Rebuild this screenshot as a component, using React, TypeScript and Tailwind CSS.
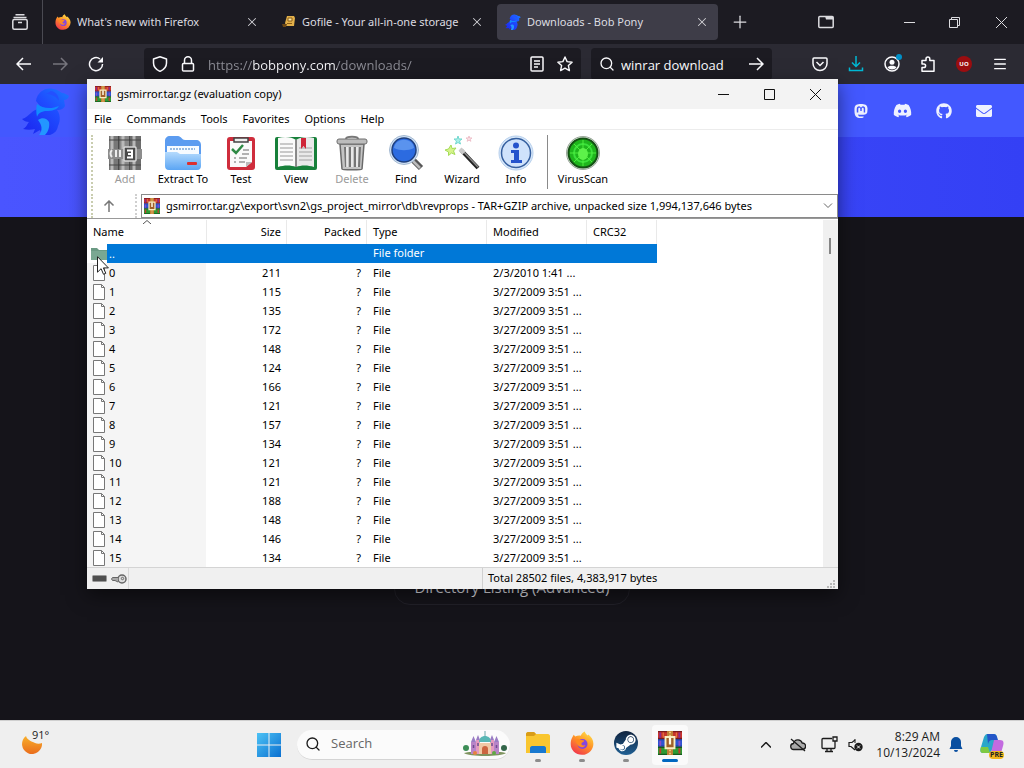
import { useState } from 'react'
import type { ReactNode } from 'react'
import { FaDiscord, FaEnvelope, FaGithub, FaMastodon, FaSteamSymbol } from 'react-icons/fa'
import { Menu, Plus, Search, X } from 'lucide-react'

type Entry = { name: string; size: string; modified: string }

const sizes = [211, 115, 135, 172, 148, 124, 166, 121, 157, 134, 121, 121, 188, 148, 146, 134]

const entries: Entry[] = sizes.map((size, i) => ({
  name: String(i),
  size: String(size),
  modified: i === 0 ? '2/3/2010 1:41 ...' : '3/27/2009 3:51 ...',
}))

const menus = ['File', 'Commands', 'Tools', 'Favorites', 'Options', 'Help']

/* ---------- icons ---------- */

function WinRarIcon({ className }: { className: string }) {
  return (
    <svg viewBox="0 0 32 32" className={className} aria-hidden="true">
      <rect width="32" height="11" fill="#c8352a" />
      <rect y="11" width="32" height="10" fill="#2d55d2" />
      <rect y="21" width="32" height="11" fill="#2c9a33" />
      <path d="M0 .8h32M0 9.800h32" stroke="#7a1a1c" strokeWidth="1.6" />
      <path d="M0 11.600h32M0 20.200h32" stroke="#1b2c86" strokeWidth="1.2" />
      <path d="M0 21.800h32M0 31.200h32" stroke="#175a1d" strokeWidth="1.6" />
      <path d="M3 2v7M28.500 2v7" stroke="#8a2a8c" strokeWidth="2.5" />
      <path d="M3 13v6.500M28.500 13v6.500" stroke="#8a4cc8" strokeWidth="2.500" />
      <path d="M3 23v7M28.500 23v7" stroke="#c43a2c" strokeWidth="2.500" />
      <path d="M7 2v7M24.500 2v7" stroke="#e8793f" strokeWidth="1.500" />
      <rect x="12" width="8" height="32" fill="#c07f36" />
      <path d="M16 1v6M16 25v6" stroke="#f7dc8a" strokeWidth="2" strokeDasharray="2 2" />
      <path d="M10 8h12v15H10z" fill="#a0602a" stroke="#fbeec0" strokeWidth="2.500" />
      <path d="M16 9v9" stroke="#fffbe8" strokeWidth="3" />
    </svg>
  )
}

function FirefoxIcon({ className }: { className: string }) {
  return (
    <svg viewBox="0 0 24 24" className={className} aria-hidden="true">
      <defs>
        <linearGradient id="fox" x1="0.8" y1="0" x2="0.2" y2="1">
          <stop offset="0" stopColor="#ffe14a" />
          <stop offset="0.45" stopColor="#ff9426" />
          <stop offset="1" stopColor="#f0304f" />
        </linearGradient>
      </defs>
      <path
        d="M2.200 6.500 3.700 3.800 5.200 5.600C7 4.600 9 4.300 10.800 4.700 11.300 2.800 13 1 14.800.4c.3 2 1.700 2.900 3 4.100l.6-.9c2.900 2.300 5 5.500 5 9.200A11.200 11.200 0 0 1 12 23.800C5.500 23.800.7 19 .7 13c0-2.500.4-4.500 1.500-6.500Z"
        fill="url(#fox)"
      />
      <circle cx="12.500" cy="13" r="5" fill="#8546dd" />
      <path d="M5.500 8.500c2-.8 4-.7 5.400.6 1.500.1 2.800.1 3.300.7-.4 1.500-2.400 1.700-2.800 2.600-.1 1.700 1.600 2.600 4 1.500-1.400 3.500-8.200 4-9.900-5.400Z" fill="#ff8a1f" />
    </svg>
  )
}

function GofileIcon() {
  return (
    <svg viewBox="0 0 16 16" className="size-4 shrink-0" aria-hidden="true">
      <path d="M7 2h7l1 2-1 8H6L5 9Z" fill="#e2b04a" />
      <path d="M8 4h4v3H8zM7 9.500h5" fill="#fbe6a4" stroke="#8c5f17" strokeWidth="1" />
      <path d="M2 10h5l-1 3H3z" fill="#6b4715" />
    </svg>
  )
}

function PonyIcon({ className }: { className: string }) {
  return (
    <svg viewBox="0 0 48 48" className={className} aria-hidden="true">
      <defs>
        <linearGradient id="mane" x1="0" y1="1" x2="1" y2="0">
          <stop offset="0" stopColor="#1a22ee" />
          <stop offset="0.6" stopColor="#1f4dff" />
          <stop offset="1" stopColor="#1a7bff" />
        </linearGradient>
      </defs>
      <path d="M14 14C15 5 24 0 31 2c4 0 7 3 9 4 3 0 5 2 7 3-1 3-3 4-5 4l1 6c-2 4-6 4-8 4 3 4 4 10 1 16-1 5-3 7-8 9h-8l-2-5-7 4 2-5c-4 1-8 1-12 0 4-2 4-5 6-7-3 0-5-1-7-3 4-1 6-4 9-6 4-4 8-3 9-7Z" fill="url(#mane)" />
      <path d="M15 17c6 5 15 5 22 2-3 5-10 5-14 5-5 1-7 3-8 6-1-5-1-9 0-13Z" fill="#128bff" />
      <path d="M16 33c4-3 9-2 11 2 1 5-1 10-4 13h-6c4-5 3-10-1-15Z" fill="#2396ff" />
      <path d="M29 4c5 1 8 5 8 10-3-5-8-7-13-7Z" fill="#2450ff" />
    </svg>
  )
}

function ShieldIcon() {
  return (
    <svg viewBox="0 0 16 16" className="size-4 shrink-0" fill="none" stroke="currentColor" strokeWidth="1.500" aria-hidden="true">
      <path d="M8 .8 14.500 3v4c0 4-2.500 6.700-6.500 8.400C4 13.700 1.500 11 1.500 7V3Z" strokeLinejoin="round" />
    </svg>
  )
}

function LockIcon() {
  return (
    <svg viewBox="0 0 16 16" className="size-4 shrink-0" fill="none" stroke="currentColor" strokeWidth="1.500" aria-hidden="true">
      <rect x="2.500" y="7.500" width="11" height="7.500" rx="1" />
      <path d="M4.500 7.500V4.300a3.500 3.500 0 0 1 7 0v3.200" />
    </svg>
  )
}

function AddIcon() {
  return (
    <svg viewBox="0 0 36 36" className="size-9" aria-hidden="true">
      <rect x="2" y="1" width="10" height="34" fill="#777" />
      <rect x="13" y="1" width="10" height="34" fill="#888" />
      <rect x="24" y="1" width="10" height="34" fill="#6c6c6c" />
      <path d="M5 1v34M16 1v34M27 1v34" stroke="#b9b9b9" strokeWidth="3" />
      <path d="M2 5h32M2 30h32" stroke="#4b4b4b" strokeWidth="1.500" strokeOpacity="0.7" />
      <path d="M12 1v34M23 1v34" stroke="#3d3d3d" strokeWidth="1.500" />
      <rect x="1" y="14" width="34" height="10" fill="#8d8d8d" />
      <path d="M5 15c-2 2-2 5 0 7M9 15v7M13 15v7" fill="none" stroke="#eee" strokeWidth="2" />
      <rect x="17" y="12" width="12" height="14" rx="1" fill="#4a4a4a" stroke="#d8d8d8" strokeWidth="1.500" />
      <path d="M20 15.500h5v7h-5M21 19h4" fill="none" stroke="#fff" strokeWidth="2" />
    </svg>
  )
}

function ExtractIcon() {
  return (
    <svg viewBox="0 0 36 36" className="size-9" aria-hidden="true">
      <defs>
        <linearGradient id="blueFolder" x1="0" y1="0" x2="0" y2="1">
          <stop offset="0" stopColor="#b4dafd" />
          <stop offset="1" stopColor="#5ba5f4" />
        </linearGradient>
      </defs>
      <path d="M0 6c0-3 2-5 5-5h8c3 0 4 4 7 4h11c3 0 5 2 5 5v12H0Z" fill="#5c9cf0" />
      <path d="M2 11h32v8H2z" fill="#f7fbff" />
      <path d="M5 14h25" stroke="#7aa6d9" strokeWidth="1.500" strokeDasharray="2 1" />
      <path d="M0 17h12l3 2h21v12c0 2-1 4-4 4H4c-3 0-4-2-4-4Z" fill="url(#blueFolder)" />
      <rect x="22" y="27" width="10" height="3" rx="1" fill="#dd3030" />
    </svg>
  )
}

function TestIcon() {
  return (
    <svg viewBox="0 0 30 36" className="h-9 w-[30px]" aria-hidden="true">
      <rect x="1" y="2" width="28" height="33" rx="3" fill="#cf2d3c" />
      <path d="M4 6h22v21l-6 5H4Z" fill="#fafafa" />
      <path d="M26 27h-6v5Z" fill="#bcbcbc" />
      <path d="M8 3h14v4H8z" fill="#eee" stroke="#444" strokeWidth="1.500" />
      <path d="m6 14 4 4 7-8" fill="none" stroke="#2e8a45" strokeWidth="2.500" />
      <path d="M17 15h6M16 19h7M8 23h2M13 23h8M8 27h2M13 27h6" stroke="#9a9a9a" strokeWidth="1.500" />
    </svg>
  )
}

function ViewIcon() {
  return (
    <svg viewBox="0 0 44 36" className="h-9 w-11" aria-hidden="true">
      <rect x="1" y="2" width="42" height="33" rx="2" fill="#17803a" />
      <path d="M4 3c7-2 14-1 18 2v27c-5-2-12-2-18 0Z" fill="#fafafa" />
      <path d="M40 3c-7-2-14-1-18 2v27c5-2 12-2 18 0Z" fill="#e9e9e9" />
      <path d="M6 9h13M6 13h13M6 17h13M6 21h13M6 25h13M25 17h13M25 21h13M25 25h13M25 13h13" stroke="#b9b9b9" strokeWidth="1.500" />
      <path d="M22 5v27" stroke="#666" strokeWidth="1.500" />
      <path d="M27 3h5v11l-2.500-3L27 14Z" fill="#cf2638" />
    </svg>
  )
}

function DeleteIcon() {
  return (
    <svg viewBox="0 0 32 36" className="h-9 w-8" aria-hidden="true">
      <path d="M4 9h24l-2 25c0 1-20 1-20 0Z" fill="#c4c4c4" stroke="#6a6a6a" strokeWidth="1.500" />
      <path d="M9 12l1 20M14 12v20M19 12v20M24 12l-1 20" stroke="#757575" strokeWidth="2" />
      <path d="M11 12v20M16 12v20M21 12v20" stroke="#f3f3f3" strokeWidth="1.500" />
      <rect x="1" y="4" width="30" height="5" rx="2" fill="#bcbcbc" stroke="#6e6e6e" />
      <path d="M10 4c0-3 12-3 12 0" fill="none" stroke="#777" strokeWidth="2" />
    </svg>
  )
}

function FindIcon() {
  return (
    <svg viewBox="0 0 36 36" className="size-9" aria-hidden="true">
      <path d="m25 25 8 8" stroke="#555" strokeWidth="6" />
      <path d="m24 25 8 8" stroke="#bbb" strokeWidth="2.500" />
      <circle cx="16" cy="15" r="14.500" fill="#cfe0f3" stroke="#a3b8d0" />
      <circle cx="16" cy="15" r="12" fill="#2c6be0" stroke="#1e3f7e" strokeWidth="1.500" />
      <path d="M6 13C7 2 25 2 26 13c-6 3-14 3-20 0Z" fill="#5a93ee" />
    </svg>
  )
}

function WizardIcon() {
  return (
    <svg viewBox="0 0 36 36" className="size-9" aria-hidden="true">
      <path d="m17 15 17 18" stroke="#222" strokeWidth="4" />
      <path d="m17 14 17 18" stroke="#8a8a8a" strokeWidth="1.500" />
      <path d="m16 14 4 4" stroke="#c9c9c9" strokeWidth="4" />
      <path d="m7 10 1 3.500 4-.5-2.500 3 1.500 3.500-3.500-1.500-3 2.500v-3.500L1 15l3.500-1Z" fill="#d6f38a" stroke="#a5dc58" />
      <path d="m14 1 1 3 3 0-2.500 2 1 3-2.500-1.500L11.500 9l1-3L10 4h3Z" fill="#a8efe6" stroke="#74d8d0" />
      <path d="m25 1 .7 2h2.300l-1.700 1.300.5 2-1.800-1.200-1.800 1.200.5-2L22 3h2.300Z" fill="#fbe3e8" stroke="#eec0ca" />
    </svg>
  )
}

function InfoIcon() {
  return (
    <svg viewBox="0 0 36 36" className="size-9" aria-hidden="true">
      <circle cx="18" cy="18" r="17" fill="#d8e8fa" stroke="#b6cfec" />
      <circle cx="18" cy="18" r="14.500" fill="#cfe2fb" stroke="#355f9f" strokeWidth="1.500" />
      <circle cx="18" cy="10.500" r="3" fill="#2453cc" />
      <path d="M13 15h8v10h3v3H13v-3h3v-7h-3Z" fill="#2453cc" />
    </svg>
  )
}

function VirusIcon() {
  return (
    <svg viewBox="0 0 36 36" className="size-9" aria-hidden="true">
      <circle cx="18" cy="18" r="16.500" fill="#dfe6df" stroke="#9aa79a" />
      <circle cx="18" cy="18" r="14.500" fill="#1fb51c" stroke="#145214" strokeWidth="2" />
      <circle cx="18" cy="18" r="9" fill="none" stroke="#3be23b" strokeWidth="2" />
      <path d="M18 5v26M5 18h26M9 9l18 18M27 9 9 27" stroke="#4fec3f" strokeWidth="1" />
      <ellipse cx="18" cy="19" rx="5" ry="6" fill="#5df24a" />
    </svg>
  )
}

const tools: { label: string; width: string; icon: ReactNode; disabled?: boolean }[] = [
  { label: 'Add', width: 'w-14', icon: <AddIcon />, disabled: true },
  { label: 'Extract To', width: 'w-[60px]', icon: <ExtractIcon /> },
  { label: 'Test', width: 'w-14', icon: <TestIcon /> },
  { label: 'View', width: 'w-[54px]', icon: <ViewIcon /> },
  { label: 'Delete', width: 'w-[58px]', icon: <DeleteIcon />, disabled: true },
  { label: 'Find', width: 'w-[50px]', icon: <FindIcon /> },
  { label: 'Wizard', width: 'w-[62px]', icon: <WizardIcon /> },
  { label: 'Info', width: 'w-[46px]', icon: <InfoIcon /> },
]

function FileIcon() {
  return (
    <svg viewBox="0 0 12 16" className="h-4 w-3 shrink-0" aria-hidden="true">
      <path d="M.5.5h8l3 3v12H.5Z" fill="#fff" stroke="#777" />
      <path d="M8.500.5v3h3" fill="none" stroke="#777" />
    </svg>
  )
}

/* ---------- browser ---------- */

function Tab({ title, icon, active }: { title: string; icon: ReactNode; active?: boolean }) {
  return (
    <div className={`flex h-9 w-[221px] items-center gap-1.5 rounded pr-[9px] pl-2 ${active ? 'bg-[#3e3d48]' : ''}`}>
      {icon}
      <button role="tab" aria-selected={!!active} className="flex-1 overflow-hidden text-left text-[11px] whitespace-nowrap text-[#dcdce0]">
        {title}
      </button>
      <button aria-label={`Close ${title}`} className="text-[#d0d0d5]">
        <X className="size-3.5" strokeWidth={1.75} />
      </button>
    </div>
  )
}

function TabStrip() {
  return (
    <header className="flex h-11 shrink-0 items-center bg-[#1c1b22] font-['Noto_Sans',sans-serif] text-[#dcdce0]">
      <button aria-label="Firefox View" className="flex h-11 w-[43px] items-center justify-center border-r border-[#4a4a52] pr-0.5">
        <svg viewBox="0 0 16 16" className="size-4" fill="none" stroke="currentColor" strokeWidth="1.500" aria-hidden="true">
          <path d="M3.500.8h9M1.500 3.500h13" />
          <rect x=".8" y="5.500" width="14.400" height="9.700" rx="1.500" />
          <path d="M6 8.500h4" />
        </svg>
      </button>
      <div role="tablist" className="ml-1 flex gap-1">
        <Tab title="What's new with Firefox" icon={<FirefoxIcon className="size-4 shrink-0" />} />
        <Tab title="Gofile - Your all-in-one storage" icon={<GofileIcon />} />
        <Tab title="Downloads - Bob Pony" icon={<PonyIcon className="size-4 shrink-0" />} active />
      </div>
      <button aria-label="New tab" className="ml-3">
        <Plus className="size-5" strokeWidth={1.500} />
      </button>
      <div className="ml-auto flex items-center pr-[17px]">
        <button aria-label="List all tabs" className="mr-[70px]">
          <svg viewBox="0 0 16 14" className="h-3.5 w-4" aria-hidden="true">
            <rect x=".8" y="1.500" width="14.400" height="11" rx="1" fill="none" stroke="currentColor" strokeWidth="1.500" />
            <path d="M7 1h8v3.500H8z" fill="currentColor" />
          </svg>
        </button>
        <button aria-label="Minimize" className="mr-[34px]">
          <svg viewBox="0 0 11 11" className="size-[11px]" stroke="currentColor" aria-hidden="true">
            <path d="M0 5.500h11" />
          </svg>
        </button>
        <button aria-label="Restore" className="mr-9">
          <svg viewBox="0 0 11 11" className="size-[11px]" fill="none" stroke="currentColor" aria-hidden="true">
            <path d="M.5 2.500h8v8h-8zM2.500 2.500v-2h8v8h-2" />
          </svg>
        </button>
        <button aria-label="Close browser">
          <svg viewBox="0 0 11 11" className="size-[11px]" stroke="currentColor" aria-hidden="true">
            <path d="m0 0 11 11M11 0 0 11" />
          </svg>
        </button>
      </div>
    </header>
  )
}

function NavBar() {
  return (
    <div className="flex h-10 shrink-0 items-center bg-[#2b2a33] text-[#fbfbfe]">
      <div className="flex w-36 items-center gap-5 pl-4">
        <button aria-label="Back">
          <svg viewBox="0 0 16 16" className="size-4" fill="none" stroke="currentColor" strokeWidth="1.500" aria-hidden="true">
            <path d="M15 8H1M7 2 1 8l6 6" />
          </svg>
        </button>
        <button aria-label="Forward" className="text-[#77767e]">
          <svg viewBox="0 0 16 16" className="size-4" fill="none" stroke="currentColor" strokeWidth="1.500" aria-hidden="true">
            <path d="M1 8h14M9 2l6 6-6 6" />
          </svg>
        </button>
        <button aria-label="Reload">
          <svg viewBox="0 0 16 16" className="size-4" fill="none" stroke="currentColor" strokeWidth="1.500" aria-hidden="true">
            <path d="M14.500 8A6.500 6.500 0 1 1 12 3" />
            <path d="M15 1v5.500H9.500Z" fill="currentColor" stroke="none" />
          </svg>
        </button>
      </div>

      <div className="flex h-8 w-[437px] items-center gap-3 rounded bg-[#1c1b22] px-2">
        <ShieldIcon />
        <LockIcon />
        {/* the gradient stops keep only the host name bright */}
        <input
          aria-label="Address"
          type="text"
          defaultValue="https://bobpony.com/downloads/"
          className="h-8 min-w-0 flex-1 bg-[linear-gradient(to_right,#8f8f98_45px,#fbfbfe_45px,#fbfbfe_129px,#8f8f98_129px)] bg-clip-text pt-0.5 text-[13px] text-transparent caret-white outline-none"
        />
        <button aria-label="Reader view">
          <svg viewBox="0 0 16 16" className="size-4" fill="none" stroke="currentColor" strokeWidth="1.500" aria-hidden="true">
            <rect x="2" y="1" width="12" height="14" rx="1" />
            <path d="M5 5h6M5 8h6M5 11h4" />
          </svg>
        </button>
        <button aria-label="Bookmark this page">
          <svg viewBox="0 0 16 16" className="size-4" fill="none" stroke="currentColor" strokeWidth="1.400" strokeLinejoin="round" aria-hidden="true">
            <path d="m8 1 2.100 4.600 5 .6-3.700 3.400 1 5L8 12.100l-4.400 2.500 1-5L.9 6.200l5-.6Z" />
          </svg>
        </button>
      </div>

      <div className="ml-2.5 flex h-8 w-[181px] items-center gap-1.5 rounded bg-[#1c1b22] px-2">
        <Search className="size-4" strokeWidth={2} />
        <input aria-label="Search the web" type="text" defaultValue="winrar download" className="h-8 min-w-0 flex-1 bg-transparent pt-0.5 text-[13px] outline-none" />
        <button aria-label="Go">
          <svg viewBox="0 0 16 16" className="size-4" fill="none" stroke="currentColor" strokeWidth="1.500" aria-hidden="true">
            <path d="M1 8h14M9 2l6 6-6 6" />
          </svg>
        </button>
      </div>

      <div className="ml-auto flex items-center gap-5 pr-4">
        <button aria-label="Pocket">
          <svg viewBox="0 0 16 16" className="size-4" fill="none" stroke="currentColor" strokeWidth="1.500" aria-hidden="true">
            <path d="M2 2h12a1 1 0 0 1 1 1v4.500a7 7 0 0 1-14 0V3a1 1 0 0 1 1-1Z" />
            <path d="m4.500 6 3.500 3.500L11.500 6" />
          </svg>
        </button>
        <button aria-label="Downloads" className="text-[#00b8d4]">
          <svg viewBox="0 0 16 16" className="size-4" fill="none" stroke="currentColor" strokeWidth="1.500" aria-hidden="true">
            <path d="M8 0v10M4 6.500l4 4 4-4M1.500 11.500v3h13v-3" />
          </svg>
        </button>
        <button aria-label="Account" className="relative">
          <svg viewBox="0 0 16 16" className="size-4" aria-hidden="true">
            <circle cx="8" cy="8" r="7" fill="none" stroke="currentColor" strokeWidth="1.500" />
            <circle cx="8" cy="6.300" r="2.500" fill="currentColor" />
            <path d="M3.500 11.500c1-2.500 8-2.500 9 0-2 2.500-7 2.500-9 0Z" fill="currentColor" />
          </svg>
          <span className="absolute -top-0.5 -right-0.5 size-1.5 rounded-full bg-[#0090c8]" />
        </button>
        <button aria-label="Extensions">
          <svg viewBox="0 0 16 16" className="size-4" fill="none" stroke="currentColor" strokeWidth="1.500" strokeLinejoin="round" aria-hidden="true">
            <path d="M2 15.200V11.500h1.800a1.800 1.800 0 0 0 0-3.600H2V4.500h4V3a1.900 1.900 0 0 1 3.800 0v1.500H14v10.700Z" />
          </svg>
        </button>
        <button aria-label="uBlock Origin" className="flex size-4 items-center justify-center rounded-full bg-[#9b0d10] text-[6px] font-bold">
          UO
        </button>
        <button aria-label="Open application menu">
          <Menu className="size-4" strokeWidth={2} />
        </button>
      </div>
    </div>
  )
}

function Page() {
  return (
    <main className="flex-1 overflow-hidden bg-[#15141a]">
      <div className="h-[133px] bg-linear-to-r from-[#4a55ff] to-[#3440f5]">
        <nav className="flex h-[53px] items-center justify-between bg-[#4358ff] pr-8 pl-[22px]">
          <a href="#home" aria-label="Bob Pony">
            <PonyIcon className="size-12" />
          </a>
          <div className="flex items-center gap-6 text-[#eef1ff]">
            <a href="#mastodon" aria-label="Mastodon"><FaMastodon className="size-4" /></a>
            <a href="#discord" aria-label="Discord"><FaDiscord className="size-[19px]" /></a>
            <a href="#github" aria-label="GitHub"><FaGithub className="size-4" /></a>
            <a href="#mail" aria-label="Mail"><FaEnvelope className="size-4" /></a>
          </div>
        </nav>
      </div>
      <div className="flex justify-center pt-[352px]">
        <button className="h-9 rounded-2xl border border-[#222129] px-5 text-[15px] text-[#dedee2]">Directory Listing (Advanced)</button>
      </div>
    </main>
  )
}

/* ---------- archive window ---------- */

function FileTable() {
  const [selected, setSelected] = useState('..')
  const divider = 'border-r border-[#e9e9e9]'

  return (
    <table className="w-[570px] table-fixed border-separate border-spacing-0 text-left text-black">
      <colgroup>
        <col className="w-[120px]" />
        <col className="w-20" />
        <col className="w-20" />
        <col className="w-[120px]" />
        <col className="w-[100px]" />
        <col className="w-[70px]" />
      </colgroup>
      <thead>
        <tr className="h-6">
          <th className={`relative pl-1.5 font-normal ${divider}`}>
            Name
            <svg viewBox="0 0 8 4" className="absolute top-0 left-14 h-1 w-2" fill="none" stroke="#555" aria-hidden="true">
              <path d="M0 4l4-3.500L8 4" />
            </svg>
          </th>
          <th className={`pr-[5px] text-right font-normal ${divider}`}>Size</th>
          <th className={`pr-[5px] text-right font-normal ${divider}`}>Packed</th>
          <th className={`pl-1.5 font-normal ${divider}`}>Type</th>
          <th className={`pl-1.5 font-normal ${divider}`}>Modified</th>
          <th className={`pl-1.5 font-normal ${divider}`}>CRC32</th>
        </tr>
      </thead>
      <tbody>
        <tr className="h-[19px] text-white">
          <td>
            <div className="flex h-[19px] items-center">
              <svg viewBox="0 0 16 13" className="ml-1 h-[13px] w-4 shrink-0" aria-hidden="true">
                <path d="M0 1h6l2 2h8v10H0Z" fill="#6b9a84" />
                <path d="M0 4h16v9H0Z" fill="#7aa892" />
              </svg>
              <span className="h-[19px] flex-1 bg-[#0078d7] pl-0.5 leading-[19px]">..</span>
            </div>
          </td>
          <td className="bg-[#0078d7]" />
          <td className="bg-[#0078d7]" />
          <td className="bg-[#0078d7] pl-1.5">File folder</td>
          <td className="bg-[#0078d7]" />
          <td className="bg-[#0078d7]" />
        </tr>
        {entries.map((e) => (
          <tr
            key={e.name}
            onClick={() => setSelected(e.name)}
            className={`h-[19px] leading-[19px] ${selected === e.name ? 'bg-[#cce8ff]' : ''}`}
          >
            <td className="border-r border-white bg-[#f5f5f5]">
              <div className="flex h-[19px] items-center gap-1 pl-1.5">
                <FileIcon />
                {e.name}
              </div>
            </td>
            <td className="pr-1.5 text-right">{e.size}</td>
            <td className="pr-1.5 text-right">?</td>
            <td className="pl-1.5">File</td>
            <td className="overflow-hidden pl-1.5 whitespace-nowrap">{e.modified}</td>
            <td />
          </tr>
        ))}
      </tbody>
    </table>
  )
}

function ArchiveWindow() {
  return (
    <section className="absolute top-[79px] left-[87px] flex w-[751px] flex-col bg-white font-['Noto_Sans',sans-serif] text-[11px] text-black shadow-[0_6px_18px_rgba(0,0,0,0.5)]">
      {/* Title bar */}
      <div className="flex h-[30px] items-center bg-[#f3f3f3] pr-[17px] pl-2">
        <WinRarIcon className="size-4" />
        <h1 className="ml-1.5 flex-1">gsmirror.tar.gz (evaluation copy)</h1>
        <div className="flex items-center gap-[35px]">
          <button aria-label="Minimize">
            <svg viewBox="0 0 11 11" className="size-[11px]" stroke="#111" aria-hidden="true"><path d="M0 5.500h11" /></svg>
          </button>
          <button aria-label="Maximize">
            <svg viewBox="0 0 11 11" className="size-[11px]" fill="none" stroke="#111" aria-hidden="true"><path d="M.5.5h10v10H.5z" /></svg>
          </button>
          <button aria-label="Close">
            <svg viewBox="0 0 11 11" className="size-[11px]" stroke="#111" aria-hidden="true"><path d="m0 0 11 11M11 0 0 11" /></svg>
          </button>
        </div>
      </div>

      {/* Menu */}
      <nav className="flex h-5 items-center gap-[15px] pl-[7px]">
        {menus.map((m) => (
          <button key={m}>{m}</button>
        ))}
      </nav>

      {/* Toolbar */}
      <div className="flex h-[63px] items-start border-t border-[#ececec] pt-[5px]">
        <div className="ml-1 h-14 border-l-2 border-dotted border-[#c9cdb0]" />
        <div className="ml-1 flex">
          {tools.map((t) => (
            <button
              key={t.label}
              disabled={t.disabled}
              className={`flex flex-col items-center whitespace-nowrap ${t.width} ${t.disabled ? 'text-[#9a9a9a]' : ''}`}
            >
              {t.icon}
              <span className="leading-4">{t.label}</span>
            </button>
          ))}
        </div>
        <div className="ml-2 h-[54px] border-l border-[#8a8a8a]" />
        <button className="ml-[5px] flex w-[60px] flex-col items-center">
          <VirusIcon />
          <span className="leading-4">VirusScan</span>
        </button>
      </div>

      {/* Address */}
      <div className="flex h-[27px] items-end border-b border-[#999]">
        <div className="ml-1 h-6 border-l-2 border-dotted border-[#c9cdb0]" />
        <button aria-label="Up one level" className="ml-2.5 flex h-6 items-center">
          <svg viewBox="0 0 12 12" className="size-3" fill="none" stroke="#777" strokeWidth="1.500" aria-hidden="true">
            <path d="M6 12V1M1.500 5.500 6 1l4.500 4.500" />
          </svg>
        </button>
        <div className="ml-5 h-6 border-l-2 border-dotted border-[#cfcfcf]" />
        <div className="ml-1 flex h-6 flex-1 items-center border border-[#8a8a8a] pr-1 pl-0.5">
          <WinRarIcon className="size-4 shrink-0" />
          <select aria-label="Archive path" className="ml-1.5 flex-1 appearance-none bg-transparent outline-none">
            <option>gsmirror.tar.gz\export\svn2\gs_project_mirror\db\revprops - TAR+GZIP archive, unpacked size 1,994,137,646 bytes</option>
          </select>
          <svg viewBox="0 0 10 6" className="h-1.5 w-2.5" fill="none" stroke="#666" aria-hidden="true">
            <path d="m1 .5 4 4 4-4" />
          </svg>
        </div>
      </div>

      {/* File list */}
      <div className="flex h-[348px] overflow-hidden pt-px">
        <div className="flex-1">
          <FileTable />
        </div>
        <div className="w-[15px] bg-[#f0f0f0] pt-[18px] pl-1.5">
          <div className="h-4 w-0.5 bg-[#858585]" />
        </div>
      </div>

      {/* Status bar */}
      <footer className="flex h-[22px] items-center border-t border-[#d4d4d4] bg-[#f0f0f0]">
        <div className="flex h-full w-[42px] items-center gap-1 border-r border-[#d9d9d9] pl-[5px]">
          <svg viewBox="0 0 15 7" className="h-[7px] w-[15px]" aria-hidden="true">
            <rect x=".5" y=".5" width="14" height="6" rx="1" fill="#4f4f4f" stroke="#999" />
          </svg>
          <svg viewBox="0 0 16 10" className="h-2.5 w-4" fill="none" stroke="#666" aria-hidden="true">
            <circle cx="11" cy="5" r="4" fill="#ddd" strokeWidth="1.500" />
            <circle cx="11.500" cy="4.500" r="1.200" />
            <path d="M7 3.500H1.500L.5 5l1 1.500H4L7 8" fill="#aaa" />
          </svg>
        </div>
        <div className="h-full w-[354px] border-r border-[#d0d0d0]" />
        <p className="flex-1 pl-[5px]">Total 28502 files, 4,383,917 bytes</p>
        <svg viewBox="0 0 10 10" className="mr-0.5 size-2.5 self-end" fill="#b8b8b8" aria-hidden="true">
          <path d="M7 1h2v2H7zM7 4h2v2H7zM7 7h2v2H7zM4 4h2v2H4zM4 7h2v2H4zM1 7h2v2H1z" />
        </svg>
      </footer>

      <svg viewBox="0 0 12 19" className="absolute top-[177px] left-2.5 h-[19px] w-3" aria-hidden="true">
        <path d="M.5.7v15.500l3.600-3.500 2.400 5.600 2.300-1-2.400-5.400h5Z" fill="#fff" stroke="#222" />
      </svg>
    </section>
  )
}

/* ---------- taskbar ---------- */

function TaskButton({ label, active, children }: { label: string; active?: boolean; children: ReactNode }) {
  return (
    <button aria-label={label} className={`flex h-10 w-9 flex-col items-center rounded pt-1.5 ${active ? 'bg-[#fafafa]' : ''}`}>
      {children}
      <span className={`mt-1 h-[3px] rounded-full ${active ? 'w-4 bg-[#0067c0]' : 'w-1.5 bg-[#8c8c8c]'}`} />
    </button>
  )
}

function CityIcon() {
  return (
    <svg viewBox="0 0 46 26" className="h-[26px] w-[46px]" aria-hidden="true">
      <path d="M2 22c6-2 36-2 42 0-4 4-38 4-42 0Z" fill="#7f9460" />
      <path d="M9 23V11h5v12M32 23V11h5v12" fill="#b884c8" />
      <path d="M14 23V9h4v14M28 23V9h4v14" fill="#e39ac0" />
      <path d="M17 23V12h12v11Z" fill="#efc9a6" />
      <path d="M17 11c0-8 12-8 12 0Z" fill="#58b7b4" />
      <path d="M23 0v5" stroke="#6aa6a8" />
      <path d="m11.500 5-2.500 6h5ZM34.500 5 32 11h5ZM16 4l-2 5h4ZM30 4l-2 5h4Z" fill="#9a7cc4" />
      <path d="M20 23v-5a3 3 0 0 1 6 0v5Z" fill="#cb6540" />
      <path d="M11.500 14v3M34.500 14v3M16 12v3M30 12v3" stroke="#704d91" strokeWidth="1.500" />
      <circle cx="4" cy="17" r="3" fill="#3c8d56" />
      <circle cx="42" cy="17" r="3" fill="#33664a" />
      <circle cx="13" cy="22" r="2" fill="#e6823f" />
      <circle cx="32" cy="22" r="2" fill="#5fa844" />
    </svg>
  )
}

function Taskbar() {
  return (
    <footer className="flex h-12 shrink-0 items-center border-t border-[#cfcfcf] bg-[#efefef] text-[#1b1b1b]">
      <button className="relative flex w-[257px] items-center pl-[22px]" aria-label="Weather">
        <svg viewBox="0 0 20 20" className="size-5" aria-hidden="true">
          <defs>
            <linearGradient id="moon" x1="0" y1="0" x2="0" y2="1">
              <stop offset="0" stopColor="#f8b02c" />
              <stop offset="1" stopColor="#ea6d1c" />
            </linearGradient>
          </defs>
          <path d="M4 1a10 10 0 1 0 16 7c-2 1-5 1-7 0S5 5 4 1Z" fill="url(#moon)" />
        </svg>
        <span className="absolute -top-2 left-8 text-[11px]">91°</span>
      </button>

      <div className="flex items-center">
        <button aria-label="Start">
          <svg viewBox="0 0 24 24" className="size-6" aria-hidden="true">
            <defs>
              <linearGradient id="win" x1="0" y1="0" x2="1" y2="1">
                <stop offset="0" stopColor="#4cc2f5" />
                <stop offset="1" stopColor="#0a6fd0" />
              </linearGradient>
            </defs>
            <path d="M0 0h11.500v11.500H0zM12.500 0H24v11.500H12.500zM0 12.500h11.500V24H0zM12.500 12.500H24V24H12.500z" fill="url(#win)" />
          </svg>
        </button>
        <label className="ml-4 flex h-[30px] w-[213px] items-center rounded-full border-b border-[#d4d4d4] bg-[#fbfbfb] pr-0.5 pl-2">
          <Search className="size-4" strokeWidth={2} />
          <input aria-label="Search" type="text" placeholder="Search" className="ml-2.5 min-w-0 flex-1 bg-transparent text-[13px] outline-none placeholder:text-[#666]" />
          <CityIcon />
        </label>
        <div className="ml-2.5 flex gap-2">
          <TaskButton label="File Explorer">
            <svg viewBox="0 0 24 24" className="size-6" aria-hidden="true">
              <path d="M0 3c0-1 1-2 2-2h6l2 2h12c1 0 2 1 2 2v17H0Z" fill="#f9c62f" />
              <path d="M0 3c0-1 1-2 2-2h6l2 2-2 2H0Z" fill="#d99c17" />
              <path d="M4 17c0-1 1-2 2-2h12c1 0 2 1 2 2v5H4Z" fill="#1778cf" />
            </svg>
          </TaskButton>
          <TaskButton label="Firefox">
            <FirefoxIcon className="size-6" />
          </TaskButton>
          <TaskButton label="Steam">
            <span className="flex size-6 items-center justify-center overflow-hidden rounded-full bg-linear-to-b from-[#10243f] to-[#1f5f93] text-white">
              <FaSteamSymbol className="size-[22px]" />
            </span>
          </TaskButton>
          <TaskButton label="WinRAR" active>
            <WinRarIcon className="size-6" />
          </TaskButton>
        </div>
      </div>

      <div className="ml-auto flex items-center pr-5">
        <button aria-label="Show hidden icons">
          <svg viewBox="0 0 10 6" className="h-1.5 w-2.5" fill="none" stroke="currentColor" strokeWidth="1.500" aria-hidden="true">
            <path d="m0 5.500 5-5 5 5" />
          </svg>
        </button>
        <button aria-label="OneDrive" className="ml-[19px]">
          <svg viewBox="0 0 16 14" className="h-3.5 w-4" fill="none" stroke="currentColor" strokeWidth="1.300" aria-hidden="true">
            <path d="M4 11.500a3 3 0 0 1-.5-6 4.500 4.500 0 0 1 8.700-.5 3.200 3.200 0 0 1 .3 6.500Z" fill="#aaa" />
            <path d="m1 1 14 12" />
          </svg>
        </button>
        <button aria-label="Network" className="ml-[15px]">
          <svg viewBox="0 0 17 17" className="size-[17px]" fill="none" stroke="currentColor" strokeWidth="1.300" aria-hidden="true">
            <path d="M11 2.500H2a1 1 0 0 0-1 1v8a1 1 0 0 0 1 1h11a1 1 0 0 0 1-1V9M4 15.500h8M6 13v2M10 13v2" />
            <path d="M12 1h4v4h-4zM14 5v4" />
          </svg>
        </button>
        <button aria-label="Volume" className="ml-2.5">
          <svg viewBox="0 0 15 14" className="h-3.5 w-[15px]" aria-hidden="true">
            <path d="M7 2 4 4.500H1v4h2L7 12" fill="none" stroke="currentColor" strokeWidth="1.200" />
            <path d="M7 1v4" stroke="currentColor" />
            <circle cx="10.500" cy="9" r="4.200" fill="#1b1b1b" />
            <path d="m9 7.500 3 3M12 7.500l-3 3" stroke="#fff" />
          </svg>
        </button>
        <div className="ml-[13px] text-right text-[12px] leading-4">
          <p>8:29 AM</p>
          <p>10/13/2024</p>
        </div>
        <button aria-label="Notifications" className="ml-[9px] text-[#0a4fa0]">
          <svg viewBox="0 0 14 16" className="h-4 w-3.5" fill="currentColor" aria-hidden="true">
            <path d="M7 0a5 5 0 0 1 5 5v4l1.500 3H.5L2 9V5a5 5 0 0 1 5-5ZM5 13h4a2 2 0 0 1-4 0Z" />
          </svg>
        </button>
        <button aria-label="Copilot" className="relative ml-[17px]">
          <svg viewBox="0 0 24 24" className="size-6" aria-hidden="true">
            <path d="M7 1h7c2 0 3 2 3 4l-5 12c-1 2-2 3-4 3H3c-3 0-3-3-2-6L4 4c1-2 2-3 3-3Z" fill="#2aa7c9" />
            <path d="M7 1h7c2 0 3 2 4 6h-6c-2 0-3 1-4 4Z" fill="#2456c8" />
            <path d="M14 7h6c4 0 4 3 3 6l-2 7H11Z" fill="#c36be0" />
            <path d="M1 14h7l2 6H3c-3 0-3-3-2-6Z" fill="#7dc943" />
          </svg>
          <span className="absolute right-0 -bottom-0.5 rounded-sm bg-[#f2b61c] px-px text-[7px] leading-[8px] font-bold text-[#222]">PRE</span>
        </button>
      </div>
    </footer>
  )
}

export default function App() {
  return (
    <div className="relative flex h-screen flex-col overflow-hidden font-['Open_Sans','Noto_Sans',sans-serif]">
      <TabStrip />
      <NavBar />
      <Page />
      <ArchiveWindow />
      <Taskbar />
    </div>
  )
}
